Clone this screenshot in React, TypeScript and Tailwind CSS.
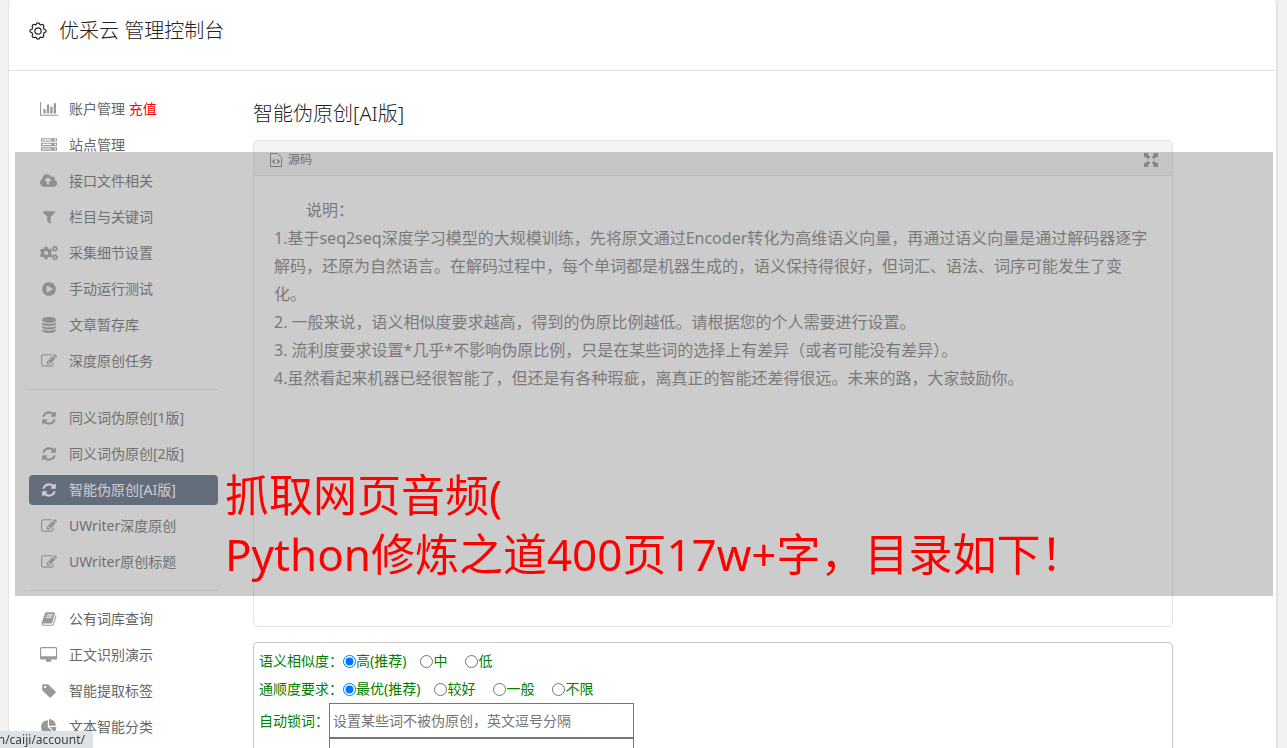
import type { ReactNode } from "react";
import { FaCogs } from "react-icons/fa";

interface IconShape {
  viewBox: string;
  d: string;
}

interface MenuItem {
  label: string;
  icon: keyof typeof icons | "cogs";
  extra?: string;
  active?: boolean;
}

const icons = {
  chart: {
    viewBox: "0 0 2048 1792",
    d: "M640 896v512h-256v-512h256zm384-512v1024h-256v-1024h256zm1024 1152v128h-2048v-1536h128v1408h1920zm-640-896v768h-256v-768h256zm384-384v1152h-256v-1152h256z",
  },
  server: {
    viewBox: "0 0 1792 1792",
    d: "M128 1408h1024v-128h-1024v128zm0-512h1024v-128h-1024v128zm1568 448q0-40-28-68t-68-28-68 28-28 68 28 68 68 28 68-28 28-68zm-1568-960h1024v-128h-1024v128zm1568 448q0-40-28-68t-68-28-68 28-28 68 28 68 68 28 68-28 28-68zm0-512q0-40-28-68t-68-28-68 28-28 68 28 68 68 28 68-28 28-68zm96 832v384h-1792v-384h1792zm0-512v384h-1792v-384h1792zm0-512v384h-1792v-384h1792z",
  },
  cloud: {
    viewBox: "0 0 1920 1792",
    d: "M1280 864q0-14-9-23l-352-352q-9-9-23-9t-23 9l-351 351q-10 12-10 24 0 14 9 23t23 9h224v352q0 13 9.5 22.5t22.5 9.5h192q13 0 22.5-9.5t9.5-22.5v-352h224q13 0 22.5-9.5t9.5-22.5zm640 288q0 159-112.5 271.5t-271.5 112.5h-1088q-185 0-316.5-131.5t-131.5-316.5q0-130 70-240t188-165q-2-30-2-43 0-212 150-362t362-150q156 0 285.5 87t188.5 231q71-62 166-62 106 0 181 75t75 181q0 76-41 138 130 31 213.5 135.5t83.5 238.5z",
  },
  filter: {
    viewBox: "0 0 1792 1792",
    d: "M1595 295q17 41-14 70l-493 493v742q0 42-39 59-13 5-25 5-27 0-45-19l-256-256q-19-19-19-45v-486l-493-493q-31-29-14-70 17-39 59-39h1280q42 0 59 39z",
  },
  play: {
    viewBox: "0 0 1792 1792",
    d: "M896 128q209 0 385.5 103t279.5 279.5 103 385.5-103 385.5-279.5 279.5-385.5 103-385.5-103-279.5-279.5-103-385.5 103-385.5 279.5-279.5 385.5-103zm384 823q32-18 32-55t-32-55l-544-320q-31-19-64-1-32 19-32 56v640q0 37 32 56 16 8 32 8 17 0 32-9z",
  },
  database: {
    viewBox: "0 0 1792 1792",
    d: "M896 768q237 0 443-43t325-127v170q0 69-103 128t-280 93.5-385 34.5-385-34.5-280-93.5-103-128v-170q119 84 325 127t443 43zm0 768q237 0 443-43t325-127v170q0 69-103 128t-280 93.5-385 34.5-385-34.5-280-93.5-103-128v-170q119 84 325 127t443 43zm0-384q237 0 443-43t325-127v170q0 69-103 128t-280 93.5-385 34.5-385-34.5-280-93.5-103-128v-170q119 84 325 127t443 43zm0-1152q208 0 385 34.5t280 93.5 103 128v128q0 69-103 128t-280 93.5-385 34.5-385-34.5-280-93.5-103-128v-128q0-69 103-128t280-93.5 385-34.5z",
  },
  edit: {
    viewBox: "0 0 1792 1792",
    d: "M888 1184l116-116-152-152-116 116v56h96v96h56zm440-720q-16-16-33 1l-350 350q-17 17-1 33t33-1l350-350q17-17 1-33zm80 594v190q0 119-84.5 203.5t-203.5 84.5h-832q-119 0-203.5-84.5t-84.5-203.5v-832q0-119 84.5-203.5t203.5-84.5h832q63 0 117 25 15 7 18 23 3 17-9 29l-49 49q-14 14-32 8-23-6-45-6h-832q-66 0-113 47t-47 113v832q0 66 47 113t113 47h832q66 0 113-47t47-113v-126q0-13 9-22l64-64q15-15 35-7t20 29zm-96-738l288 288-672 672h-288v-288zm444 132l-92 92-288-288 92-92q28-28 68-28t68 28l152 152q28 28 28 68t-28 68z",
  },
  refresh: {
    viewBox: "0 0 1792 1792",
    d: "M1639 1056q0 5-1 7-64 268-268 434.5t-478 166.5q-146 0-282.5-55t-243.5-157l-129 129q-19 19-45 19t-45-19-19-45v-448q0-26 19-45t45-19h448q26 0 45 19t19 45-19 45l-137 137q71 66 161 102t187 36q134 0 250-65t186-179q11-17 53-117 8-23 30-23h192q13 0 22.5 9.5t9.5 22.5zm25-800v448q0 26-19 45t-45 19h-448q-26 0-45-19t-19-45 19-45l138-138q-148-137-349-137-134 0-250 65t-186 179q-11 17-53 117-8 23-30 23h-199q-13 0-22.5-9.5t-9.5-22.5v-7q65-268 270-434.5t480-166.5q146 0 284 55.5t245 156.5l130-129q19-19 45-19t45 19 19 45z",
  },
  book: {
    viewBox: "0 0 1792 1792",
    d: "M1703 478q40 57 18 129l-275 906q-19 64-76.5 107.5t-122.5 43.5h-923q-77 0-148.5-53.5t-99.5-131.5q-24-67-2-127 0-4 3-27t4-37q1-8-3-21.5t-3-19.5q2-11 8-21t16.5-23.5 16.5-23.5q23-38 45-91.5t30-91.5q3-10 .5-30t-.5-28q3-11 17-28t17-23q21-36 42-92t25-90q1-9-2.5-32t.5-28q4-13 22-30.5t22-22.5q19-26 42.5-84.5t27.5-96.5q1-8-3-25.5t-2-26.5q2-8 9-18t18-23 17-21q8-12 16.5-30.5t15-35 16-36 19.5-32 26.5-23.5 36-11.5 47.5 5.5l-1 3q38-9 51-9h761q74 0 114 56t18 130l-274 906q-36 119-71.5 153.5t-128.5 34.5h-869q-27 0-38 15-11 16-1 43 24 70 144 70h923q29 0 56-15.5t35-41.5l300-987q7-22 5-57 38 15 59 43zm-1064 2q-4 13 2 22.5t20 9.5h608q13 0 25.5-9.5t16.5-22.5l21-64q4-13-2-22.5t-20-9.5h-608q-13 0-25.5 9.5t-16.5 22.5zm-83 256q-4 13 2 22.5t20 9.5h608q13 0 25.5-9.5t16.5-22.5l21-64q4-13-2-22.5t-20-9.5h-608q-13 0-25.5 9.5t-16.5 22.5z",
  },
  desktop: {
    viewBox: "-64 0 1920 1792",
    d: "M1728 992v-832q0-13-9.5-22.5t-22.5-9.5h-1600q-13 0-22.5 9.5t-9.5 22.5v832q0 13 9.5 22.5t22.5 9.5h1600q13 0 22.5-9.5t9.5-22.5zm128-832v1088q0 66-47 113t-113 47h-544q0 37 16 77.5t32 71 16 43.5q0 26-19 45t-45 19h-512q-26 0-45-19t-19-45q0-14 16-44t32-70 16-78h-544q-66 0-113-47t-47-113v-1088q0-66 47-113t113-47h1600q66 0 113 47t47 113z",
  },
  tag: {
    viewBox: "0 0 1792 1792",
    d: "M576 448q0-53-37.5-90.5t-90.5-37.5-90.5 37.5-37.5 90.5 37.5 90.5 90.5 37.5 90.5-37.5 37.5-90.5zm1067 576q0 53-37 90l-491 492q-39 37-91 37-53 0-90-37l-715-716q-38-37-64.5-101t-26.5-117v-416q0-52 38-90t90-38h416q53 0 117 26.5t102 64.5l715 714q37 39 37 91z",
  },
  pie: {
    viewBox: "0 0 1792 1792",
    d: "M768 890l546 546q-106 108-247.5 168t-298.5 60q-209 0-385.5-103t-279.5-279.5-103-385.5 103-385.5 279.5-279.5 385.5-103v762zm187 6h773q0 157-60 298.5t-168 247.5zm709-128h-768v-768q209 0 385.5 103t279.5 279.5 103 385.5z",
  },
} satisfies Record<string, IconShape>;

const menuGroups: MenuItem[][] = [
  [
    { label: "账户管理", icon: "chart", extra: "充值" },
    { label: "站点管理", icon: "server" },
    { label: "接口文件相关", icon: "cloud" },
    { label: "栏目与关键词", icon: "filter" },
    { label: "采集细节设置", icon: "cogs" },
    { label: "手动运行测试", icon: "play" },
    { label: "文章暂存库", icon: "database" },
    { label: "深度原创任务", icon: "edit" },
  ],
  [
    { label: "同义词伪原创[1版]", icon: "refresh" },
    { label: "同义词伪原创[2版]", icon: "refresh" },
    { label: "智能伪原创[AI版]", icon: "refresh", active: true },
    { label: "UWriter深度原创", icon: "edit" },
    { label: "UWriter原创标题", icon: "edit" },
  ],
  [
    { label: "公有词库查询", icon: "book" },
    { label: "正文识别演示", icon: "desktop" },
    { label: "智能提取标签", icon: "tag" },
    { label: "文本智能分类", icon: "pie" },
  ],
];

const notes = [
  "1.基于seq2seq深度学习模型的大规模训练，先将原文通过Encoder转化为高维语义向量，再通过语义向量是通过解码器逐字解码，还原为自然语言。在解码过程中，每个单词都是机器生成的，语义保持得很好，但词汇、语法、词序可能发生了变化。",
  "2. 一般来说，语义相似度要求越高，得到的伪原比例越低。请根据您的个人需要进行设置。",
  "3. 流利度要求设置*几乎*不影响伪原比例，只是在某些词的选择上有差异（或者可能没有差异）。",
  "4.虽然看起来机器已经很智能了，但还是有各种瑕疵，离真正的智能还差得很远。未来的路，大家鼓励你。",
];

function MenuIcon({ name }: { name: MenuItem["icon"] }) {
  if (name === "cogs") return <FaCogs className="h-[18px] w-[18px]" />;
  const { viewBox, d } = icons[name];
  return (
    <svg viewBox={viewBox} className="h-4 w-auto" fill="currentColor" fillRule="evenodd" aria-hidden="true">
      <path d={d} />
    </svg>
  );
}

function GearIcon() {
  return (
    <svg viewBox="0 0 18 18" className="h-[18px] w-[18px]" fill="none" stroke="currentColor" strokeWidth="1.2" aria-hidden="true">
      <circle cx="9" cy="9" r="3.2" />
      <path
        strokeLinejoin="round"
        d="M7.3 2.4C7.4 1 7.9.8 9 .8s1.6.2 1.7 1.6l1.2.5c1.1-.9 1.6-.7 2.4.1s1 1.3.1 2.4l.6 1.9c1.4.1 2.2.6 2.2 1.7s-.8 1.6-2.2 1.7l-.6 1.9c.9 1.1.7 1.6-.1 2.4s-1.3 1-2.4.1l-1.2.5c-.1 1.4-.6 1.6-1.7 1.6s-1.6-.2-1.7-1.6l-1.2-.5c-1.1.9-1.6.7-2.4-.1s-1-1.3-.1-2.4L3 10.7C1.6 10.6.8 10.1.8 9S1.6 7.4 3 7.3l.6-1.9c-.9-1.1-.7-1.6.1-2.4s1.3-1 2.4-.1z"
      />
    </svg>
  );
}

function SourceIcon() {
  return (
    <svg viewBox="0 0 12 14" className="h-[14px] w-3 text-[#777]" fill="none" stroke="currentColor" aria-hidden="true">
      <path d="M.5.5h7l4 4v9H.5z" />
      <path strokeWidth="1.3" d="M4.8 6.5l-2 2 2 2M7.2 6.5l2 2-2 2" />
    </svg>
  );
}

function ExpandIcon() {
  return (
    <svg viewBox="0 0 14 14" className="h-[14px] w-[14px]" fill="currentColor" aria-hidden="true">
      <path d="M0 0h5L3.600 1.400l2.600 2.600L4 6.200 1.400 3.600 0 5zM14 0v5l-1.400-1.400L10 6.200 7.800 4l2.600-2.600L9 0zM0 14V9l1.400 1.400L4 7.800 6.200 10l-2.600 2.600L5 14zM14 14H9l1.400-1.400L7.800 10 10 7.800l2.600 2.600L14 9z" />
    </svg>
  );
}

function Sidebar() {
  return (
    <nav className="w-[189px] shrink-0">
      {menuGroups.map((group, i) => (
        <ul
          key={i}
          className={i ? "mt-[13px] flex flex-col gap-1.5 border-t border-[#e3e3e3] pt-[13px]" : "flex flex-col gap-1.5"}
        >
          {group.map((item) => (
            <li key={item.label}>
              <a
                href="#"
                className={
                  item.active
                    ? "flex h-[30px] items-center rounded bg-[#53627b] pl-2.5 text-white"
                    : "flex h-[30px] items-center rounded pl-2.5 text-[#666]"
                }
              >
                <span className={item.active ? "flex w-5 justify-center" : "flex w-5 justify-center text-[#999]"}>
                  <MenuIcon name={item.icon} />
                </span>
                <span className="ml-2.5 whitespace-nowrap">
                  {item.label}
                  {item.extra && <span className="text-[#ff0000]"> {item.extra}</span>}
                </span>
              </a>
            </li>
          ))}
        </ul>
      ))}
    </nav>
  );
}

function RadioRow({ title, name, options }: { title: string; name: string; options: string[] }) {
  return (
    <fieldset className="flex h-7 items-center">
      <legend className="float-left">{title}</legend>
      <div className="flex gap-[18px]">
        {options.map((option, i) => (
          <label key={option} className={i === 0 ? "-mr-1 flex items-center" : "flex items-center"}>
            <input type="radio" name={name} defaultChecked={i === 0} className="h-[13px] w-[13px]" />
            {option}
          </label>
        ))}
      </div>
    </fieldset>
  );
}

function Panel({ children }: { children: ReactNode }) {
  return (
    <section className="min-h-[487px] rounded border border-[#e3e3e3] bg-white">
      <div className="flex h-[35px] items-center justify-between border-b border-[#e3e3e3] bg-[#f4f4f4] pt-1 pr-3.5 pl-4 text-xs text-[#666]">
        <button type="button" className="flex items-center gap-1.5">
          <SourceIcon />
          源码
        </button>
        <button type="button" aria-label="全屏" className="text-[#888]">
          <ExpandIcon />
        </button>
      </div>
      <div className="px-5 py-5 text-base leading-7 text-[#777]">{children}</div>
    </section>
  );
}

export default function App() {
  return (
    <div className="h-screen overflow-hidden bg-[#f1f1f1] pr-[9px] pl-2 font-['Noto_Sans','Noto_Sans_CJK_SC',sans-serif] text-sm">
      <div className="min-h-full rounded-t border-r-2 border-l border-[#e3e3e3] bg-white">
        <header className="flex h-[71px] items-center border-b border-[#e3e3e3] pb-2 pl-5 text-[#222]">
          <GearIcon />
          <h1 className="ml-3 text-xl font-light">优采云 管理控制台</h1>
        </header>

        <div className="flex gap-[35px] pt-[23px] pl-5">
          <Sidebar />
          <main className="mr-[103px] min-w-0 flex-1">
            <h2 className="mb-1.5 text-xl leading-10 font-light text-[#222]">智能伪原创[AI版]</h2>
            <Panel>
              <p className="indent-8">说明：</p>
              {notes.map((note) => (
                <p key={note}>{note}</p>
              ))}
            </Panel>

            <form className="mt-[15px] rounded border border-[#c8c8c8] px-[5px] py-1 text-[#008000]">
              <RadioRow title="语义相似度：" name="similarity" options={["高(推荐)", "中", "低"]} />
              <RadioRow title="通顺度要求：" name="fluency" options={["最优(推荐)", "较好", "一般", "不限"]} />
              <div className="flex items-center">
                <label htmlFor="lock-words" className="w-[70px]">
                  自动锁词：
                </label>
                <input
                  id="lock-words"
                  type="text"
                  placeholder="设置某些词不被伪原创，英文逗号分隔"
                  className="h-[35px] w-[305px] border border-[#767676] px-[3px] text-[#333] placeholder:text-[#757575]"
                />
              </div>
              <textarea
                aria-label="原文"
                className="ml-[70px] block h-20 w-[305px] resize-none border border-[#767676]"
              />
            </form>
          </main>
        </div>
      </div>

      <div className="fixed top-[152px] right-[14px] left-[15px] h-[444px] bg-[#808080]/40" />
      <p className="fixed top-[466px] left-[225px] text-[44px] leading-[59px] whitespace-nowrap text-[#ff0000]">
        抓取网页音频(
        <br />
        Python修炼之道400页17w+字，目录如下！
      </p>

      <div className="fixed bottom-0 left-0 flex h-[17px] w-[93px] items-center justify-end overflow-hidden rounded-tr bg-[#dee1e6] pr-2 text-xs text-[#3c4043]">
        <span>n/caiji/account/</span>
      </div>
    </div>
  );
}
